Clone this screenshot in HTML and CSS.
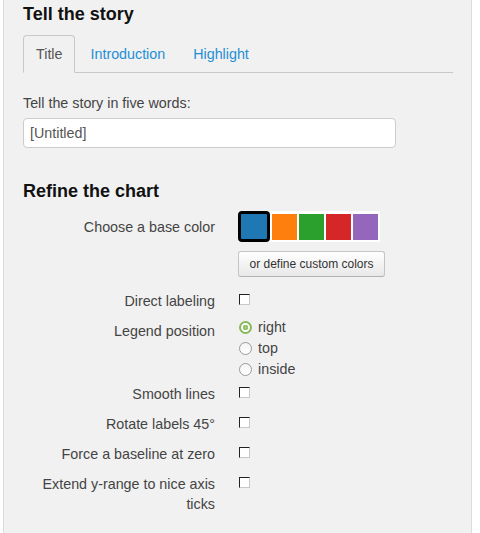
FILE: index.html
```html
<!DOCTYPE html>
<html>
<head>
<meta charset="utf-8">
<link rel="stylesheet" href="styles.css">
</head>
<body>
<div class="panel">
  <h2 class="heading">Tell the story</h2>
  <ul class="tabs">
    <li class="tab active">Title</li>
    <li class="tab">Introduction</li>
    <li class="tab">Highlight</li>
  </ul>
  <div class="field-label">Tell the story in five words:</div>
  <div class="input">[Untitled]</div>

  <h2 class="heading heading-refine">Refine the chart</h2>

  <div class="row row-color">
    <div class="lbl">Choose a base color</div>
    <div class="ctl ctl-color">
      <div class="swatches">
        <span class="swatch selected" style="background:#1f77b4"></span>
        <span class="swatch" style="background:#ff7f0e"></span>
        <span class="swatch" style="background:#2ca02c"></span>
        <span class="swatch" style="background:#d62728"></span>
        <span class="swatch" style="background:#9467bd"></span>
      </div>
      <div class="btn">or define custom colors</div>
    </div>
  </div>

  <div class="row">
    <div class="lbl">Direct labeling</div>
    <div class="ctl"><span class="checkbox"></span></div>
  </div>

  <div class="row">
    <div class="lbl">Legend position</div>
    <div class="ctl">
      <div class="radios">
        <div class="radio-line"><span class="radio checked"></span>right</div>
        <div class="radio-line"><span class="radio"></span>top</div>
        <div class="radio-line"><span class="radio"></span>inside</div>
      </div>
    </div>
  </div>

  <div class="row">
    <div class="lbl">Smooth lines</div>
    <div class="ctl"><span class="checkbox"></span></div>
  </div>

  <div class="row">
    <div class="lbl">Rotate labels 45°</div>
    <div class="ctl"><span class="checkbox"></span></div>
  </div>

  <div class="row">
    <div class="lbl">Force a baseline at zero</div>
    <div class="ctl"><span class="checkbox"></span></div>
  </div>

  <div class="row">
    <div class="lbl">Extend y-range to nice axis ticks</div>
    <div class="ctl"><span class="checkbox"></span></div>
  </div>
</div>
</body>
</html>
```

FILE: styles.css
```css
html, body {
  margin: 0;
  padding: 0;
  background: #ffffff;
  height: 100%;
}

body {
  font-family: "Liberation Sans", Arial, sans-serif;
  font-size: 14.3px;
  color: #444;
  overflow: hidden;
}

.panel {
  margin-left: 3px;
  width: 469px;
  min-height: 533px;
  box-sizing: border-box;
  background: #f1f1f1;
  border-left: 1px solid #dcdcdc;
  border-right: 1px solid #dcdcdc;
  padding: 4px 19px 0 19px;
}

.heading {
  margin: 0;
  font-size: 18px;
  line-height: 20px;
  font-weight: bold;
  color: #111;
}

.tabs {
  list-style: none;
  margin: 11px 0 0 0;
  padding: 0;
  display: flex;
  width: 430px;
  border-bottom: 1px solid #c8c8c8;
}

.tab {
  padding: 8px 12px;
  line-height: 20px;
  margin-right: 2px;
  margin-bottom: -1px;
  border: 1px solid transparent;
  border-radius: 4px 4px 0 0;
  color: #1e8fd5;
}

.tab.active {
  color: #555;
  border-color: #c8c8c8;
  border-bottom-color: #f1f1f1;
  background: #f1f1f1;
}

.field-label {
  margin-top: 20px;
  line-height: 20px;
}

.input {
  margin-top: 5px;
  width: 373px;
  height: 30px;
  box-sizing: border-box;
  background: #fff;
  border: 1px solid #cccccc;
  border-radius: 4px;
  padding: 0 6px;
  line-height: 28px;
  color: #555;
}

.heading-refine {
  margin-top: 33px;
}

.row {
  display: flex;
  margin-bottom: 10px;
}

.row-color {
  margin-top: 16px;
}

.lbl {
  width: 192px;
  text-align: right;
  line-height: 20px;
  flex: none;
}

.ctl {
  margin-left: 23px;
  line-height: 20px;
}

.ctl-color {
  margin-top: -6px;
}

.swatches {
  display: flex;
  align-items: center;
  background: #fff;
  height: 31px;
  padding-right: 2px;
  width: fit-content;
}

.swatch {
  display: block;
  width: 25px;
  height: 26px;
  margin-left: 2px;
}

.swatch.selected {
  width: 26px;
  height: 25px;
  margin-left: 0;
  border: 3px solid #000;
  border-radius: 4px;
}

.btn {
  margin-top: 9px;
  margin-bottom: 4px;
  width: 147px;
  height: 26px;
  box-sizing: border-box;
  border: 1px solid #c4c4c4;
  border-bottom-color: #b3b3b3;
  border-radius: 3px;
  background: linear-gradient(#ffffff, #e8e8e8);
  font-size: 12px;
  line-height: 24px;
  text-align: center;
  color: #333;
}

.checkbox {
  display: block;
  width: 11px;
  height: 11px;
  margin-top: 3px;
  margin-left: 1px;
  box-sizing: border-box;
  background: #fff;
  border: 1px solid;
  border-color: #222 #c8c8c8 #c8c8c8 #222;
}

.radios {
  margin-top: -4px;
  margin-bottom: -6px;
}

.radio-line {
  display: flex;
  align-items: center;
  line-height: 21px;
  height: 21px;
  color: #444;
}

.radio {
  display: block;
  width: 13px;
  height: 13px;
  box-sizing: border-box;
  border: 1px solid #9a9a9a;
  border-radius: 50%;
  background: linear-gradient(#f4f4f4, #ffffff);
  margin-left: 1px;
  margin-right: 6px;
}

.radio.checked {
  border: 2px solid #86b95a;
  background: radial-gradient(circle, #a5cf7e 0, #8cc05e 2.5px, #ffffff 3px);
}
```
